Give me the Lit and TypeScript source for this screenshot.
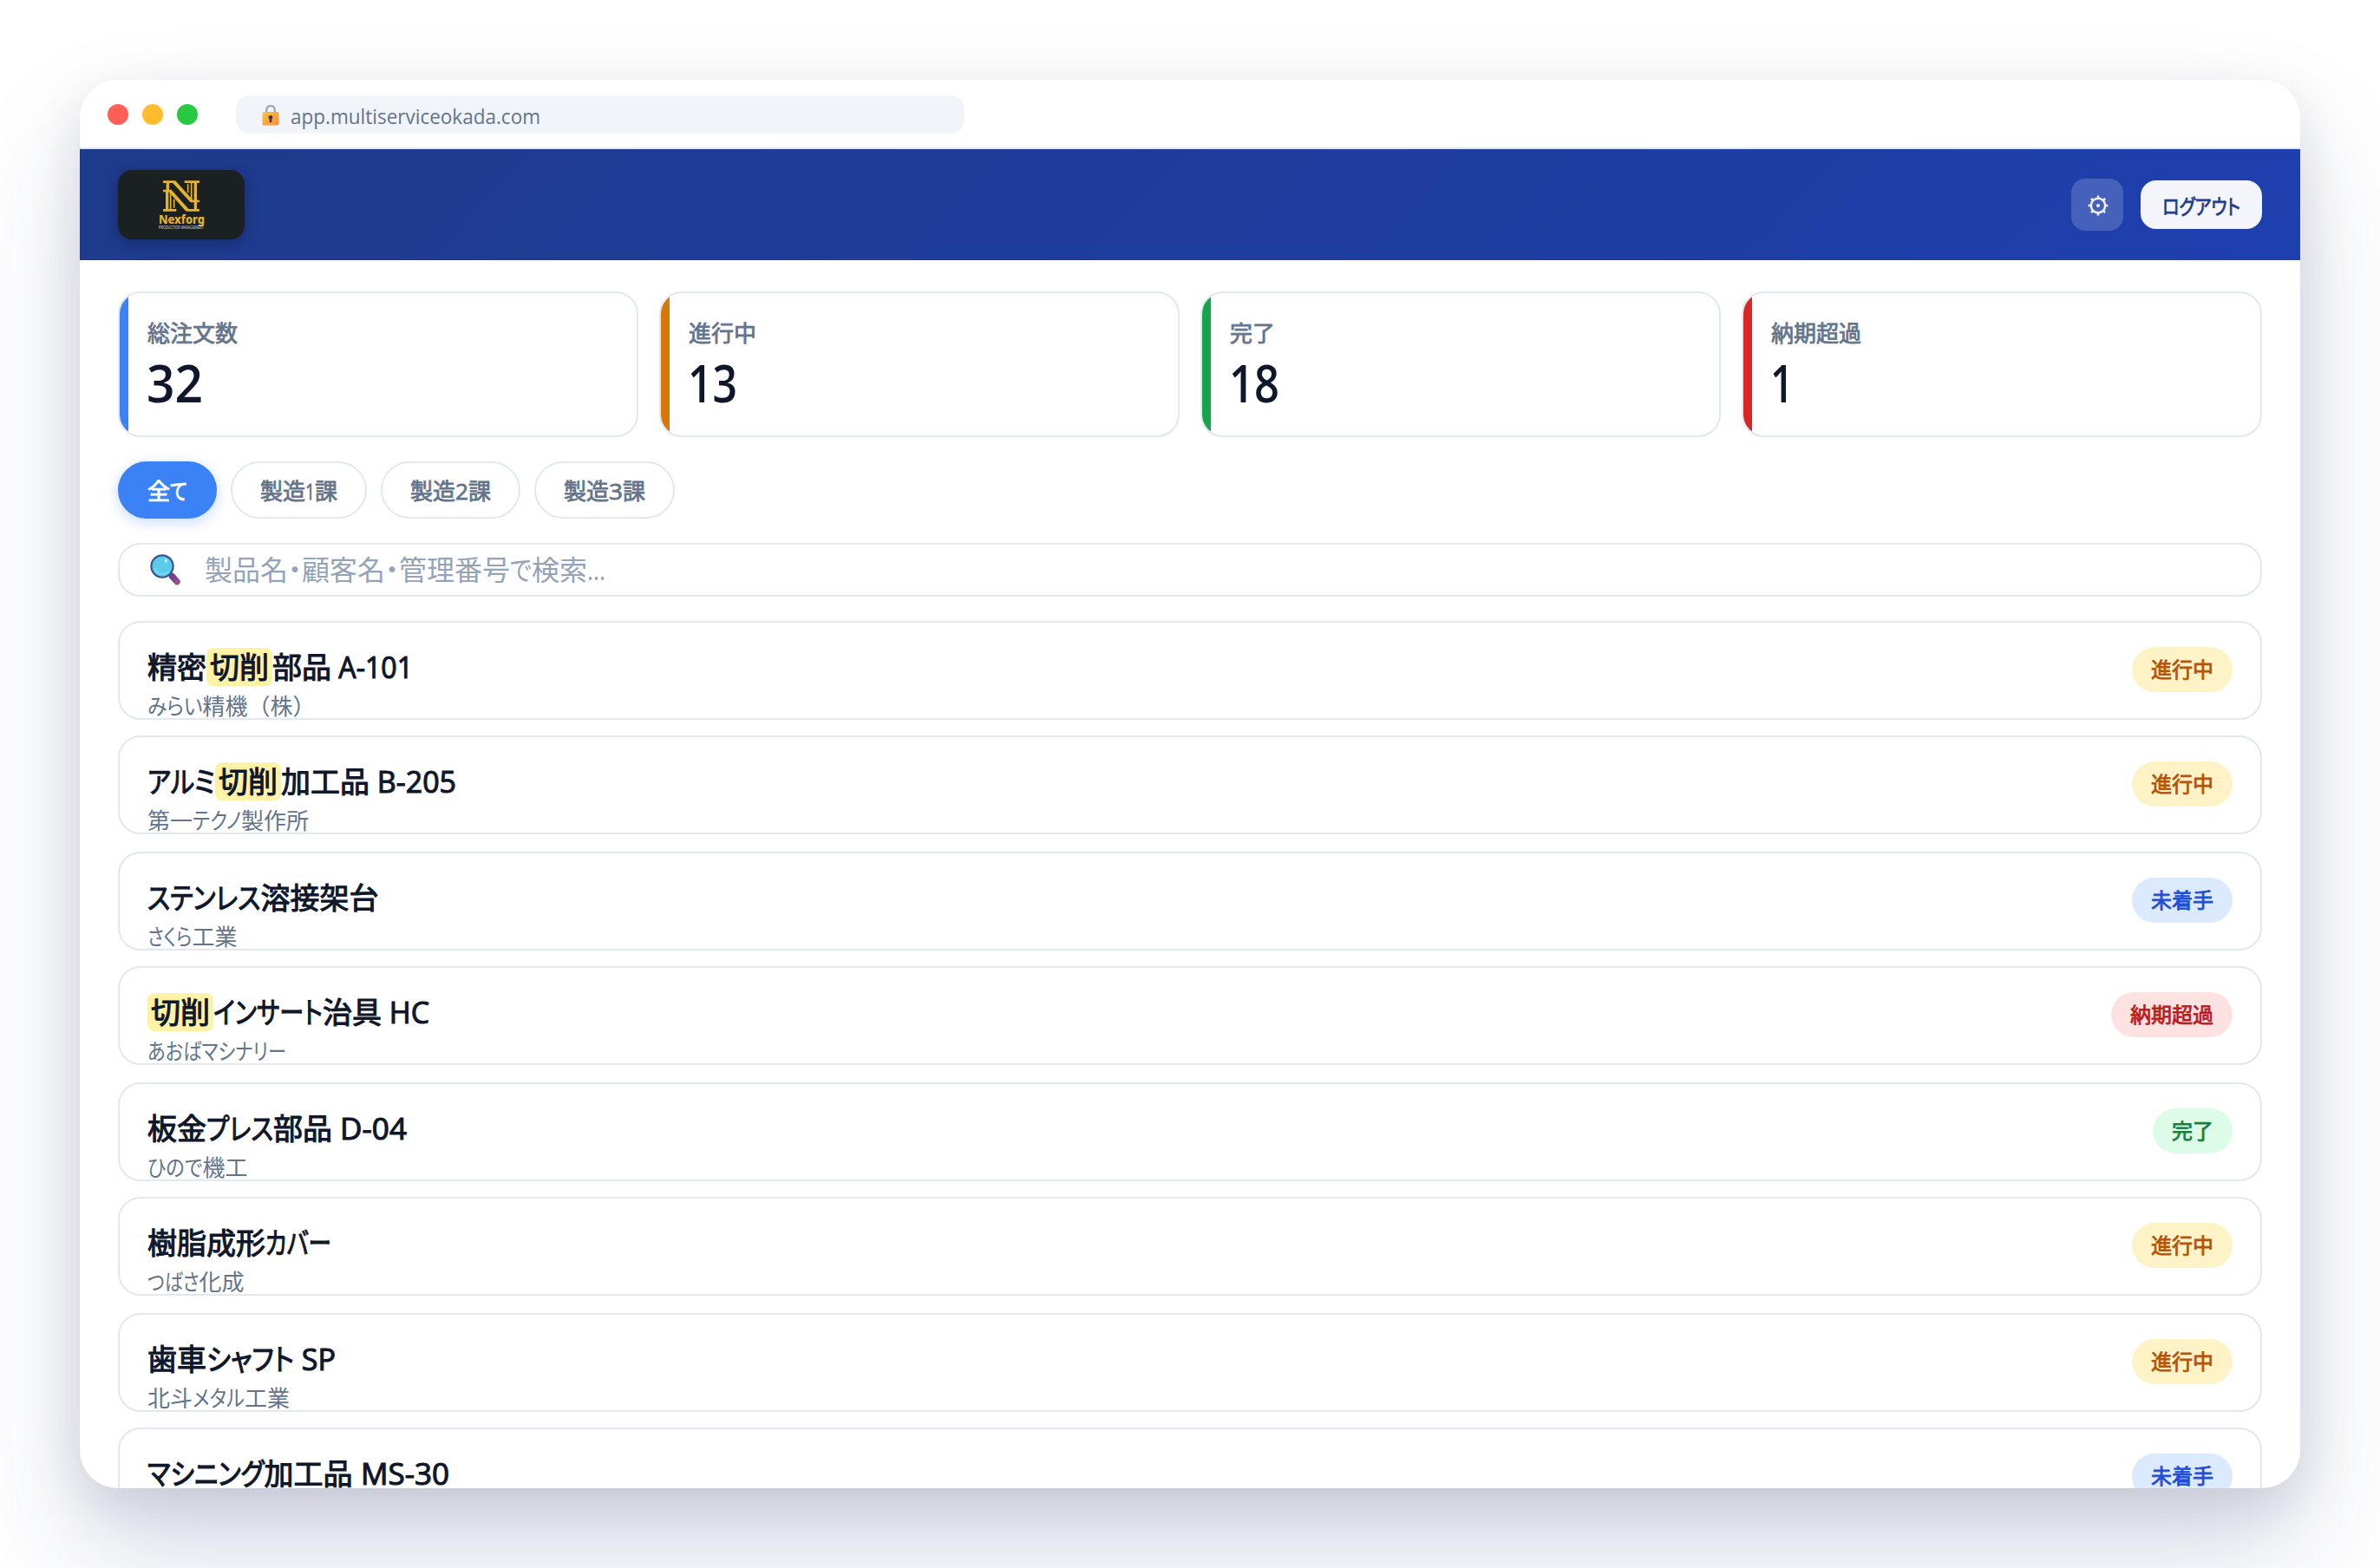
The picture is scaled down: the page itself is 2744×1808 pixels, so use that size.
import { LitElement, css, html, svg } from "lit"
import { customElement, property } from "lit/decorators.js"

// A run of text: either as is, or squeezed to a given advance width
type Run = string | { text: string; width: number; mark?: boolean }

const k = (text: string, width: number): Run => ({ text, width })
const mark = (text: string): Run => ({ text, width: 0, mark: true })

const STATS = [
  { label: "総注文数", value: k("32", 65), tone: "blue" },
  { label: "進行中", value: k("13", 57), tone: "amber" },
  { label: "完了", value: k("18", 58), tone: "green" },
  { label: "納期超過", value: k("1", 27), tone: "red" },
]

const CHIPS: Run[][] = [
  ["全", k("て", 20)],
  ["製造", k("1", 11), "課"],
  ["製造", k("2", 15), "課"],
  ["製造", k("3", 16), "課"],
]

const PLACEHOLDER: Run[] = [
  "製品名",
  k("・", 16),
  "顧客名",
  k("・", 16),
  "管理番号",
  k("で", 25),
  "検索",
  k("...", 21),
]

const STATUS = {
  progress: "進行中",
  todo: "未着手",
  late: "納期超過",
  done: "完了",
}

const ORDERS: { title: Run[]; client: Run[]; status: keyof typeof STATUS }[] = [
  {
    title: ["精密", mark("切削"), "部品", k(" A-101", 94)],
    client: [k("みらい", 63.5), "精機（株）"],
    status: "progress",
  },
  {
    title: [k("アルミ", 78), mark("切削"), "加工品", k(" B-205", 100)],
    client: ["第一", k("テクノ", 56), "製作所"],
    status: "progress",
  },
  {
    title: [k("ステンレス", 130.5), "溶接架台"],
    client: [k("さくら", 51.5), "工業"],
    status: "todo",
  },
  {
    title: [mark("切削"), k("インサート", 126), "治具", k(" HC", 55)],
    client: [k("あおばマシナリー", 160)],
    status: "late",
  },
  {
    title: ["板金", k("プレス", 77), "部品", k(" D-04", 86)],
    client: [k("ひので", 63.5), "機工"],
    status: "done",
  },
  {
    title: ["樹脂成形", k("カバー", 76)],
    client: [k("つばさ", 59.5), "化成"],
    status: "progress",
  },
  {
    title: ["歯車", k("シャフト", 101), k(" SP", 48)],
    client: ["北斗", k("メタル", 60), "工業"],
    status: "progress",
  },
  {
    title: [k("マシニング", 134.5), "加工品", k(" MS-30", 111)],
    client: [],
    status: "todo",
  },
]

@customElement("fit-text")
export class FitText extends LitElement {
  static styles = css`
    :host {
      display: inline-block;
      white-space: pre;
    }

    .inner {
      display: inline-block;
      transform-origin: 0 50%;
      font-feature-settings: "palt";
    }
  `

  @property() text = ""
  @property({ type: Number }) width = 0

  render() {
    return html`<span class="inner">${this.text}</span>`
  }

  updated() {
    const inner = this.renderRoot.querySelector<HTMLElement>(".inner")!
    const natural = inner.getBoundingClientRect().width
    this.style.width = `${this.width}px`
    inner.style.transform = `scaleX(${this.width / natural})`
  }
}

const runs = (list: Run[]) =>
  list.map((r) => {
    if (typeof r === "string") return r
    if (r.mark) return html`<mark class="hit">${r.text}</mark>`
    return html`<fit-text .text=${r.text} .width=${r.width}></fit-text>`
  })

const lockIcon = html`
  <svg class="lock" viewBox="0 0 20 24">
    <defs>
      <linearGradient id="body" x1="0" y1="0" x2="1" y2="1">
        <stop offset="0" stop-color="#fcc545" />
        <stop offset="1" stop-color="#f68a3a" />
      </linearGradient>
    </defs>
    <path
      d="M5.2 10V5.8a4.8 4.8 0 0 1 9.6 0V10"
      fill="none"
      stroke="#a9a7b4"
      stroke-width="2.4"
    />
    <rect x="0.5" y="8" width="19" height="15.5" rx="1.8" fill="url(#body)" />
    <path
      d="M10 12a2.5 2.5 0 0 1 1.3 4.6V19a1.3 1.3 0 0 1-2.6 0v-2.4A2.5 2.5 0 0 1 10 12z"
      fill="#4a3040"
    />
  </svg>
`

const searchIcon = html`
  <svg class="magnifier" viewBox="0 0 36 36">
    <defs>
      <linearGradient id="handle" x1="0" y1="0" x2="1" y2="1">
        <stop offset="0" stop-color="#6b3f86" />
        <stop offset="1" stop-color="#9c4f93" />
      </linearGradient>
    </defs>
    <path d="M21 22l4 4" stroke="#3f4f86" stroke-width="3" />
    <path
      d="M25.5 25.5l5.6 6.2"
      stroke="url(#handle)"
      stroke-width="7.4"
      stroke-linecap="round"
    />
    <circle
      cx="14"
      cy="14"
      r="12.6"
      fill="#5bcbec"
      stroke="#3d5289"
      stroke-width="2.2"
    />
    <path
      d="M6 17a8.6 8.6 0 0 0 14 3.4"
      fill="none"
      stroke="#74dbf5"
      stroke-width="2"
      stroke-linecap="round"
    />
    <ellipse cx="18.4" cy="7.6" rx="1.6" ry="2.4" fill="#b7ecfa" />
  </svg>
`

const gearIcon = html`
  <svg class="gear" viewBox="0 0 24 24">
    <circle cx="12" cy="12" r="8.2" />
    <circle class="hub" cx="12" cy="12" r="2.1" />
    ${[0, 45, 90, 135, 180, 225, 270, 315].map(
      (a) => svg`<path d="M12 4V0.6" transform="rotate(${a} 12 12)" />`
    )}
  </svg>
`

const logo = html`
  <svg class="monogram" viewBox="0 0 126 106">
    <g fill="none" stroke="#e3b32d" stroke-width="8">
      <path d="M0 4h42M74 4h52M0 35h28M0 102h46M82 102h44M96 71h30" />
      <path d="M16 4v31M14 35v67M112 4v98" stroke-width="10" />
      <path d="M98 4v67M26 40v62M86 12v30M38 64v30" stroke-width="5" />
      <path d="M38 4L99 71" stroke-width="12" />
      <path d="M24 35L84 102" stroke-width="12" />
    </g>
  </svg>
`

@customElement("app-root")
export class AppRoot extends LitElement {
  static styles = css`
    :host {
      display: block;
      box-sizing: border-box;
      height: 1808px;
      padding: 92px;
      overflow: hidden;
      background: #fff;
      color: #0f172a;
      font-family: "Open Sans", "Noto Sans CJK JP", sans-serif;
    }

    * {
      box-sizing: border-box;
    }

    .window {
      height: 1624px;
      border-radius: 44px;
      background: #fff;
      box-shadow:
        0 76px 140px rgba(30, 50, 120, 0.17),
        0 20px 60px rgba(15, 23, 42, 0.12);
    }

    .frame {
      height: 100%;
      border-radius: 44px;
      overflow: hidden;
    }

    .titlebar {
      display: flex;
      align-items: center;
      gap: 16px;
      height: 80px;
      padding: 2px 32px 0;
      border-bottom: 2px solid #e2e8f0;
    }

    .dot {
      width: 24px;
      height: 24px;
      border-radius: 50%;
    }

    .close {
      background: #ff5f57;
    }

    .minimize {
      background: #febc2e;
    }

    .zoom {
      background: #28c840;
    }

    .url {
      display: flex;
      align-items: center;
      gap: 13px;
      width: 840px;
      height: 44px;
      margin-left: 28px;
      padding: 2px 30px 0;
      border-radius: 16px;
      background: #f1f5f9;
      color: #64748b;
      font-size: 24px;
      line-height: 41px;
    }

    .lock {
      width: 20px;
      height: 24px;
    }

    .header {
      display: flex;
      align-items: center;
      gap: 20px;
      height: 128px;
      padding: 0 44px;
      background: linear-gradient(135deg, #1e3a8a, #1e40af);
    }

    .logo {
      display: flex;
      flex-direction: column;
      align-items: center;
      width: 146px;
      height: 80px;
      margin-right: auto;
      padding-top: 12px;
      border-radius: 16px;
      background: #1b2023;
      box-shadow: 0 4px 16px rgba(0, 0, 0, 0.25);
    }

    .monogram {
      flex: none;
      width: 42px;
      height: 36px;
    }

    .brand {
      margin-top: 1px;
      color: #e3b32d;
      font: 800 14px/15px "Noto Sans", sans-serif;
    }

    .tagline {
      color: #d3d6d7;
      font: 5px/5px "Liberation Sans", sans-serif;
    }

    .settings {
      display: grid;
      place-items: center;
      width: 60px;
      height: 60px;
      border-radius: 16px;
      background: rgba(255, 255, 255, 0.18);
    }

    .gear {
      width: 24px;
      height: 24px;
      margin: 2px 0 0 2px;
      fill: none;
      stroke: #eef1fa;
      stroke-width: 2.5;
    }

    .hub {
      fill: #eef1fa;
      stroke: none;
    }

    .logout {
      display: grid;
      place-items: center;
      width: 140px;
      height: 56px;
      border-radius: 18px;
      background: rgba(255, 255, 255, 0.95);
      color: #1e3a8a;
      font-size: 24px;
      -webkit-text-stroke: 0.8px;
    }

    .content {
      padding: 36px 44px 0;
    }

    .stats {
      display: grid;
      grid-template-columns: repeat(4, 1fr);
      gap: 24px;
    }

    .stat {
      display: flex;
      height: 168px;
      border: 2px solid #e2e8f0;
      border-radius: 26px;
      overflow: hidden;
    }

    .accent {
      width: 10px;
    }

    .blue {
      background: #3b82f6;
    }

    .amber {
      background: #d97706;
    }

    .green {
      background: #16a34a;
    }

    .red {
      background: #dc2626;
    }

    .stat-body {
      padding: 27px 22px;
    }

    .stat-label {
      color: #64748b;
      font-size: 26px;
      line-height: 38px;
      -webkit-text-stroke: 0.8px;
    }

    .stat-value {
      margin-left: -1px;
      font-size: 60px;
      font-weight: 600;
      line-height: 77px;
    }

    .chips {
      display: flex;
      gap: 16px;
      margin-top: 28px;
    }

    .chip {
      height: 66px;
      padding: 0 32px;
      border: 2px solid #e2e8f0;
      border-radius: 33px;
      color: #64748b;
      font-size: 26px;
      line-height: 64px;
      white-space: nowrap;
      -webkit-text-stroke: 0.8px;
    }

    .chip.active {
      border-color: #3b82f6;
      background: #3b82f6;
      box-shadow: 0 4px 16px rgba(59, 130, 246, 0.3);
      color: #fff;
    }

    .search {
      display: flex;
      align-items: center;
      gap: 27px;
      height: 62px;
      margin-top: 28px;
      padding: 0 35px;
      border: 2px solid #e2e8f0;
      border-radius: 26px;
      color: #94a3b8;
      font-size: 32px;
      line-height: 58px;
    }

    .magnifier {
      width: 36px;
      height: 36px;
    }

    .orders {
      margin-top: 28px;
    }

    .order {
      display: flex;
      justify-content: space-between;
      align-items: flex-start;
      height: 114px;
      margin-bottom: 20px;
      padding: 28px 32px 0;
      border: 2px solid #e2e8f0;
      border-radius: 26px;
    }

    .order:nth-child(odd) {
      margin-bottom: 18px;
    }

    .title {
      font-size: 34px;
      line-height: 46px;
      white-space: nowrap;
      -webkit-text-stroke: 1.1px;
    }

    .hit {
      display: inline-block;
      height: 44px;
      padding: 0 4px;
      border-radius: 8px;
      background: #fef2a6;
      color: inherit;
      line-height: 44px;
    }

    .client {
      margin-top: 6px;
      color: #64748b;
      font-size: 26px;
      line-height: 32px;
      white-space: nowrap;
    }

    .badge {
      height: 52px;
      padding: 0 22px;
      border-radius: 26px;
      font-size: 24px;
      line-height: 52px;
      -webkit-text-stroke: 0.8px;
    }

    .progress {
      background: #fef3c7;
      color: #b45309;
    }

    .todo {
      background: #dbeafe;
      color: #1d4ed8;
    }

    .late {
      background: #fee2e2;
      color: #b91c1c;
    }

    .done {
      background: #dcfce7;
      color: #15803d;
    }
  `

  render() {
    return html`
      <div class="window">
        <div class="frame">
          <div class="titlebar">
            <span class="dot close"></span>
            <span class="dot minimize"></span>
            <span class="dot zoom"></span>
            <div class="url">
              ${lockIcon}
              <fit-text text="app.multiserviceokada.com" width="288"></fit-text>
            </div>
          </div>
          <div class="header">
            <div class="logo">
              ${logo}
              <fit-text class="brand" text="Nexforg" width="53"></fit-text>
              <fit-text class="tagline" text="PRODUCTION MANAGEMENT" width="52"></fit-text>
            </div>
            <div class="settings">${gearIcon}</div>
            <div class="logout">
              <fit-text text="ログアウト" width="90"></fit-text>
            </div>
          </div>
          <div class="content">
            <div class="stats">
              ${STATS.map(
                (s) => html`
                  <div class="stat">
                    <div class="accent ${s.tone}"></div>
                    <div class="stat-body">
                      <div class="stat-label">${s.label}</div>
                      <div class="stat-value">${runs([s.value])}</div>
                    </div>
                  </div>
                `
              )}
            </div>
            <div class="chips">
              ${CHIPS.map(
                (c, i) =>
                  html`<div class="chip ${i === 0 ? "active" : ""}">${runs(c)}</div>`
              )}
            </div>
            <div class="search">
              ${searchIcon}
              <div>${runs(PLACEHOLDER)}</div>
            </div>
            <div class="orders">
              ${ORDERS.map(
                (o) => html`
                  <div class="order">
                    <div>
                      <div class="title">${runs(o.title)}</div>
                      <div class="client">${runs(o.client)}</div>
                    </div>
                    <div class="badge ${o.status}">${STATUS[o.status]}</div>
                  </div>
                `
              )}
            </div>
          </div>
        </div>
      </div>
    `
  }
}
